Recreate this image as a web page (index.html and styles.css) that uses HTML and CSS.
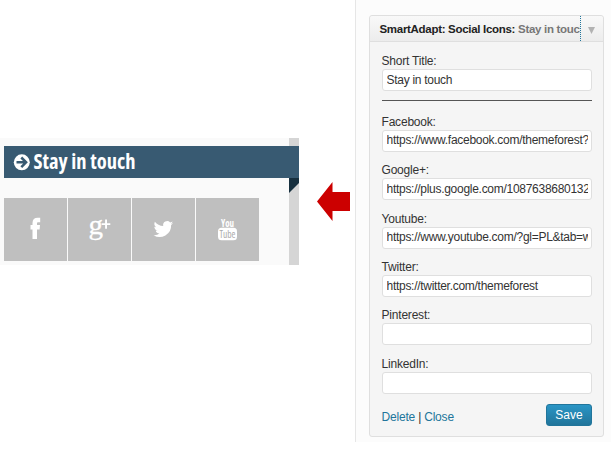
FILE: index.html
```html
<!DOCTYPE html>
<html lang="en">
<head>
<meta charset="utf-8">
<title>Social Icons widget</title>
<link rel="stylesheet" href="styles.css">
</head>
<body>
<main class="page">
  <section class="preview">
    <h2 class="ribbon">
      <svg width="295" height="32" viewBox="0 0 295 32">
        <circle cx="17.8" cy="16.3" r="8" fill="#fff"/>
        <path d="M12.500 16.300H21M17.300 11.500l4.800 4.800-4.800 4.800" fill="none" stroke="#385a72" stroke-width="2.500"/>
        <text class="ribbon-text" x="29.500" y="23.300" textLength="102" lengthAdjust="spacingAndGlyphs">Stay in touch</text>
      </svg>
    </h2>
    <svg class="fold" width="10" height="15" viewBox="0 0 10 15"><path d="M0 0h10v5L0 15z" fill="#17303f"/></svg>
    <div class="tiles">
      <a class="tile"><svg width="63" height="63" viewBox="0 0 63 63"><path d="M28.500 41V31.500h-2V27h2v-2c0-3.500 1.900-5.200 5.200-5.200h2.500v4.400h-1.700c-1.200 0-1.500.5-1.500 1.300V27h3l-.4 4.500H33V41z"/></svg></a>
      <a class="tile"><svg width="63" height="63" viewBox="0 0 63 63"><text class="g" x="20.500" y="36" textLength="14.500" lengthAdjust="spacingAndGlyphs">g</text><path d="M37.100 21.500H39v3.700h3.300V27H39v3.800h-1.900V27h-3.500v-1.800h3.500z"/></svg></a>
      <a class="tile"><svg width="63" height="63" viewBox="0 0 63 63"><path transform="translate(21.500 21.200) scale(.82)" d="M24 4.600c-.9.400-1.800.7-2.800.8 1-.6 1.800-1.600 2.200-2.700-1 .6-2 1-3.100 1.200A4.900 4.900 0 0 0 11.900 8.400C7.700 8.100 4.100 6.100 1.700 3.100c-1.300 2.200-.7 5.100 1.500 6.600-.8 0-1.600-.2-2.200-.6 0 2.300 1.600 4.400 3.900 4.900-.7.200-1.500.2-2.200.1.600 2 2.400 3.400 4.600 3.400A9.900 9.900 0 0 1 0 19.500 14 14 0 0 0 21.500 7.100c1-.7 1.800-1.600 2.500-2.500z"/></svg></a>
      <a class="tile"><svg width="63" height="63" viewBox="0 0 63 63"><text class="you" x="25" y="28.500" textLength="13" lengthAdjust="spacingAndGlyphs">You</text><rect x="22" y="29.700" width="19" height="12.500" rx="3.500"/><text class="tube" x="23.500" y="40" textLength="16" lengthAdjust="spacingAndGlyphs">Tube</text></svg></a>
    </div>
  </section>
  <svg class="arrow" width="33" height="39" viewBox="0 0 33 39"><path d="M0 19.500L15.500 0v10H33v19H15.500v10z" fill="#c00"/></svg>
  <aside class="sidebar">
    <form class="widget">
      <header class="head"><div class="title"><b>SmartAdapt: Social Icons:</b> Stay in touch</div><svg class="toggle" width="7" height="7" viewBox="0 0 7 7"><path d="M0 0h7L3.500 7z" fill="#b2b2b2"/></svg></header>
      <div class="fields">
        <label class="field">Short Title:<input value="Stay in touch"></label>
        <hr>
        <label class="field">Facebook:<input value="https://www.facebook.com/themeforest?ref"></label>
        <label class="field">Google+:<input value="https://plus.google.com/108763868013299"></label>
        <label class="field">Youtube:<input value="https://www.youtube.com/?gl=PL&amp;tab=w1"></label>
        <label class="field">Twitter:<input value="https://twitter.com/themeforest"></label>
        <label class="field">Pinterest:<input></label>
        <label class="field">LinkedIn:<input></label>
      </div>
      <footer class="actions"><span><a>Delete</a> | <a>Close</a></span><button type="button">Save</button></footer>
    </form>
  </aside>
</main>
</body>
</html>
```
FILE: styles.css
```css
* { box-sizing: border-box; }
body { margin: 0; background: #fff; font: 12px/16px "Liberation Sans", Arial, sans-serif; color: #333; }
svg { display: block; }
.page { display: flex; align-items: flex-start; height: 456px; overflow: hidden; }

.preview { position: relative; width: 299px; height: 127px; margin-top: 138px; padding: 8px 0 0 4px; background: #fafafa; border-right: 10px solid #d5d5d5; }
.ribbon { width: 295px; height: 32px; margin: 0; background: #385a72; }
.ribbon-text { font: 700 21px "Open Sans", sans-serif; font-stretch: 75%; fill: #fff; }
.fold { position: absolute; left: 289px; top: 40px; }
.tiles { display: flex; gap: 1px; margin-top: 20px; }
.tile { width: 63px; height: 63px; background: #bfbfbf; fill: #fff; }
.g { font: 28px "Liberation Serif", serif; stroke: #fff; stroke-width: .3px; }
.you { font: 700 11px "Open Sans", sans-serif; font-stretch: 75%; }
.tube { font: 11px "Open Sans", sans-serif; font-stretch: 75%; fill: #aaa; }

.arrow { margin: 182px 5px 0 18px; }

.sidebar { width: 256px; height: 442px; padding: 15px 0 0 13px; background: #fcfcfc; border-left: 1px solid #e6e6e6; }
.widget { width: 235px; height: 422px; background: #f5f5f5; border: 1px solid #dfdfdf; border-radius: 3px; letter-spacing: -.2px; }
.head { display: flex; height: 26px; background: linear-gradient(#f9f9f9, #ececec); border-bottom: 1px solid #dfdfdf; border-radius: 3px 3px 0 0; }
.title { width: 211px; padding-left: 9.500px; font-size: 11.500px; letter-spacing: -.3px; line-height: 26px; font-weight: 700; color: #777; white-space: nowrap; overflow: hidden; border-right: 1px dotted #21759b; }
.title b { color: #222; }
.toggle { margin: 11px 0 0 7px; }
.fields { padding: 11px 11px 0 11.500px; }
.field { display: block; height: 48.400px; }
.field input { display: block; width: 210.500px; height: 22px; padding: 0 3px 1px 4px; border: 1px solid #dfdfdf; border-radius: 3px; background: #fff; font: inherit; letter-spacing: -.28px; color: #333; outline: 0; }
hr { width: 210px; height: 1px; margin: -1px 0 12.500px; border: 0; background: #555; }
.actions { display: flex; justify-content: space-between; align-items: center; margin: 0 11px 0 11.500px; }
.actions span { padding-top: 3px; }
.actions a { color: #21759b; }
.actions button { width: 46px; height: 22px; padding: 0; border: 1px solid #21759b; border-radius: 3px; background: linear-gradient(#2a95c5, #21759b); color: #fff; font: inherit; }
```
